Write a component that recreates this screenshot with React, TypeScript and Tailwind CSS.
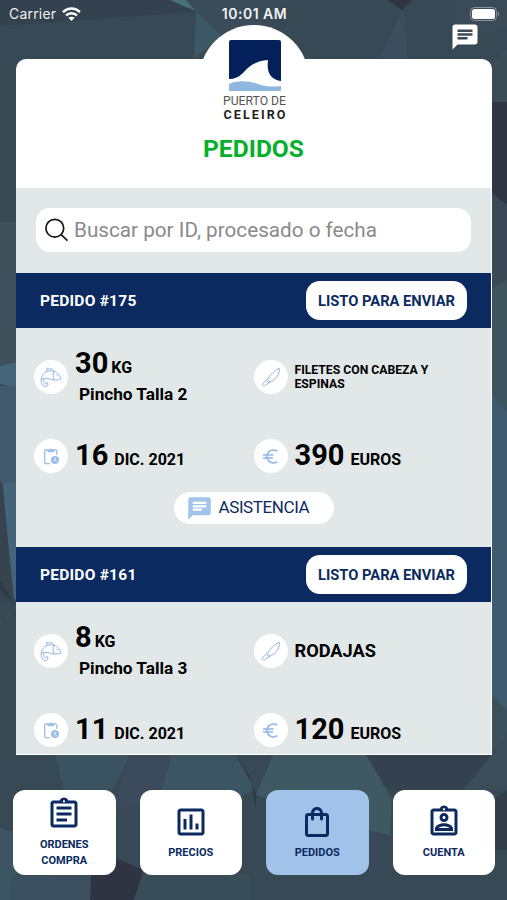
import {
  MdChat,
  MdOutlineAssignment,
  MdOutlineAssignmentInd,
  MdOutlinePoll,
  MdOutlineShoppingBag,
} from "react-icons/md";

type Order = {
  id: number;
  status: string;
  kg: number;
  product: string;
  cut: string;
  longCut?: boolean;
  day: number;
  month: string;
  price: number;
  support?: boolean;
};

const ORDERS: Order[] = [
  {
    id: 175,
    status: "LISTO PARA ENVIAR",
    kg: 30,
    product: "Pincho Talla 2",
    cut: "FILETES CON CABEZA Y ESPINAS",
    longCut: true,
    day: 16,
    month: "DIC. 2021",
    price: 390,
    support: true,
  },
  {
    id: 161,
    status: "LISTO PARA ENVIAR",
    kg: 8,
    product: "Pincho Talla 3",
    cut: "RODAJAS",
    day: 11,
    month: "DIC. 2021",
    price: 120,
  },
];

const TABS = [
  { icon: <MdOutlineAssignment size={36} />, label: "ORDENES COMPRA" },
  { icon: <MdOutlinePoll size={36} />, label: "PRECIOS" },
  { icon: <MdOutlineShoppingBag size={36} />, label: "PEDIDOS", active: true },
  { icon: <MdOutlineAssignmentInd size={36} />, label: "CUENTA" },
];

function Backdrop() {
  return (
    <svg
      className="absolute inset-0 h-full w-full"
      viewBox="0 0 507 900"
      preserveAspectRatio="none"
    >
      <rect width="507" height="900" fill="#384956" />
      <path d="M0 0H170L196 12L0 26Z" fill="#34414e" />
      <path d="M170 0H186L198 12Z" fill="#49707d" />
      <path d="M186 0H290L240 40L194 60L198 14Z" fill="#3a4c59" />
      <path d="M196 12L222 36L194 58Z" fill="#3d5865" />
      <path d="M388 0H412L402 10Z" fill="#2f3541" />
      <path d="M402 10L380 60H408L404 14Z" fill="#3c4e5d" />
      <path d="M456 0H507V28L456 40Z" fill="#3a4a57" />
      <path d="M507 50L490 64V102H507Z" fill="#3b4c56" />
      <path d="M490 102H507V205L490 192Z" fill="#2f3542" />
      <path d="M490 192L507 205V300H490Z" fill="#3b4957" />
      <path d="M490 290L507 280V412L490 392Z" fill="#3e545f" />
      <path d="M490 392L507 412V710L490 695Z" fill="#405b70" />
      <path d="M0 222H18V365H0Z" fill="#3d505c" />
      <path d="M0 366L18 362V388L0 384Z" fill="#43667a" />
      <path d="M0 386H18V484H0Z" fill="#415a6e" />
      <path d="M2 484L18 482V604L14 598Z" fill="#44647a" />
      <path d="M0 600L14 602L13 600L3 486L0 480Z" fill="#36444f" />
      <path d="M0 580L14 602L0 590Z" fill="#2f3a46" />
      <path d="M0 626L14 604L10 616L0 622Z" fill="#3c4f5a" />
      <path d="M55 755H130L112 790L70 810Z" fill="#3b5361" />
      <path d="M130 755H180L160 800L112 810Z" fill="#3b4b5b" />
      <path d="M172 755H236L256 790L230 800L160 795Z" fill="#3c5563" />
      <path d="M236 755L256 792V810L250 776Z" fill="#2e3b47" />
      <path d="M273 755H366L392 800L390 835L366 830L256 795Z" fill="#3f5963" />
      <path d="M366 755H507V740L462 790H388Z" fill="#33424e" />
      <path d="M507 735L464 790H507Z" fill="#3a4d58" />
      <path d="M490 694L507 710V735L490 755Z" fill="#3c515c" />
      <path d="M0 828L24 836L12 900H0Z" fill="#3c5563" />
      <path d="M12 876L90 874L92 900H10Z" fill="#3b4f5f" />
      <path d="M92 865L116 858L143 870L134 900H90Z" fill="#2e3442" />
      <path d="M143 875H250V900H134Z" fill="#394d59" />
      <path d="M366 830L392 836L376 876H366Z" fill="#384858" />
      <path d="M494 800L507 790V850H494Z" fill="#323d49" />
    </svg>
  );
}

function StatusBar() {
  return (
    <div className="grid h-7 grid-cols-3 items-center pl-[9px] pr-[7px] font-['Inter',sans-serif] text-[14px] leading-none text-white/95">
      <div className="flex items-center gap-1.5">
        <span className="tracking-[0.2px]">Carrier</span>
        <svg width="19" height="14" viewBox="0 0 19 14" fill="none" stroke="white" strokeWidth="2.5">
          <path d="M1 5.2C6 .4 13 .4 18 5.2" />
          <path d="M4 8.4C7.2 5.5 11.8 5.5 15 8.4" />
          <path d="M9.5 14L6.4 10.8C8 9.3 11 9.3 12.6 10.8Z" fill="white" stroke="none" />
        </svg>
      </div>
      <span className="text-center text-[14px] font-semibold tracking-[0.5px]">10:01 AM</span>
      <svg className="justify-self-end" width="30" height="14" viewBox="0 0 30 14">
        <rect x="0.5" y="0.5" width="26" height="13" rx="4" fill="none" stroke="#8a949c" />
        <rect x="2" y="2" width="23" height="10" rx="2.5" fill="white" />
        <path d="M28 5C29.7 5.5 29.7 8.5 28 9Z" fill="#8a949c" />
      </svg>
    </div>
  );
}

function Logo() {
  return (
    <svg width="52" height="51" viewBox="0 0 52 51">
      <path
        d="M2 0H50Q52 0 52 2V41C43 40 37 34 39 20C25 21 20 27 14 33Q8 39 0 39V2Q0 0 2 0Z"
        fill="#04205a"
      />
      <path d="M0 44C9 40 20 41 29 44C38 47 44 47 52 46V51H0Z" fill="#8fb7e0" />
    </svg>
  );
}

function FishIcon() {
  return (
    <svg width="22" height="21" viewBox="0 0 22 21" fill="none" stroke="#8fb6e8" strokeWidth="1" strokeLinejoin="round">
      <path d="M1.2 12.4C1.8 6.6 6 3.6 12 3.8C16.4 4.2 19.8 7.4 20.9 11.9C17.6 13.6 13.4 13.2 10.4 12.2C7 11.2 3.6 11 1.2 12.4Z" />
      <path d="M6.6 4.8L7 1L9.4 2.2L11.4 1.5L13.6 3.8" />
      <path d="M14 4.1C12.6 6.6 12.8 10 14.2 13" />
      <path d="M1.2 12.4C.8 15.6 2.2 18.4 5.2 19.8L8.2 17.8L7.4 15.6L5.4 16.8C4 15.8 3.4 14 3.8 11.6" />
      <circle cx="17.2" cy="8.8" r="0.3" />
    </svg>
  );
}

function KnifeIcon() {
  return (
    <svg width="20" height="20" viewBox="0 0 20 20" fill="none" stroke="#8fb6e8" strokeWidth="1" strokeLinejoin="round">
      <path d="M18.3 1.2C13.2 3.6 9.2 7.8 6.4 12.2L9.2 15C14.6 12.6 18.9 8 18.3 1.2Z" />
      <path d="M6.4 12.2L1.8 16.4C.3 18 2.2 19.8 3.8 18.5L9.2 15M5.4 13.2L8 15.8" />
    </svg>
  );
}

function DateIcon() {
  return (
    <svg width="17" height="18" viewBox="0 0 17 18" fill="none" stroke="#9cbfe9" strokeWidth="1.3">
      <path d="M7 16.6H3Q1.7 16.6 1.7 15.3V4.3Q1.7 3 3 3H12.6Q13.9 3 13.9 4.3V8" />
      <path d="M4.6 2.6H6.2A1.7 1.7 0 0 1 9.4 2.6H11V5.2H4.6Z" fill="#9cbfe9" stroke="none" />
      <circle cx="12" cy="13" r="4" fill="#9cbfe9" stroke="none" />
      <path d="M12 10.8V13.2L13.5 14.6" stroke="white" strokeWidth="0.9" />
    </svg>
  );
}

function EuroIcon() {
  return (
    <svg width="17" height="17" viewBox="0 0 17 17" fill="none" stroke="#8fb6e8" strokeWidth="1.5">
      <path d="M15.3 3.3A6.5 6.5 0 1 0 15.3 13.7" />
      <path d="M1 7H11.5M1 10H11" strokeWidth="1.3" />
    </svg>
  );
}

function RoundIcon({ children }: { children: React.ReactNode }) {
  return (
    <div className="flex h-[34px] w-[34px] shrink-0 items-center justify-center rounded-full bg-white">
      {children}
    </div>
  );
}

function OrderCard({ order }: { order: Order }) {
  return (
    <section>
      {/* Header */}
      <div className="flex h-[55px] items-center justify-between bg-[#0b2a60] pl-[24px] pr-6">
        <h2 className="pt-[3px] text-[15.5px] font-bold tracking-[0.25px] text-white">
          PEDIDO #{order.id}
        </h2>
        <button className="h-[39px] w-[161px] rounded-[14px] bg-white pt-px text-[14.7px] font-bold text-[#0b2a60]">
          {order.status}
        </button>
      </div>

      {/* Details */}
      <div className="flex h-[219px] flex-col px-[18px] pt-[17px]">
        <div className="grid grid-cols-2">
          <div className="flex h-16 items-center gap-[7px]">
            <RoundIcon>
              <FishIcon />
            </RoundIcon>
            <div className="flex flex-col pb-[3px]">
              <p className="text-[17px] font-bold leading-[33px]">
                <span className="text-[29px]">{order.kg}</span>
                <span className="ml-[3px] text-[16px]">KG</span>
              </p>
              <p className="ml-[4px] text-[17.2px] font-bold leading-5">{order.product}</p>
            </div>
          </div>
          <div className="flex h-16 items-center gap-[7px]">
            <RoundIcon>
              <KnifeIcon />
            </RoundIcon>
            <p
              className={
                order.longCut
                  ? "w-[145px] text-[12.2px] font-bold leading-[14.5px]"
                  : "text-[18.2px] font-bold"
              }
            >
              {order.cut}
            </p>
          </div>
        </div>

        <div className="mt-[30px] grid grid-cols-2">
          <div className="flex h-[34px] items-center gap-[7px]">
            <RoundIcon>
              <DateIcon />
            </RoundIcon>
            <p className="font-bold">
              <span className="text-[29px]">{order.day}</span>
              <span className="ml-[6px] text-[16px]">{order.month}</span>
            </p>
          </div>
          <div className="flex h-[34px] items-center gap-[7px]">
            <RoundIcon>
              <EuroIcon />
            </RoundIcon>
            <p className="font-bold">
              <span className="text-[29px]">{order.price}</span>
              <span className="ml-[6px] text-[16px]">EUROS</span>
            </p>
          </div>
        </div>

        {order.support && (
          <button className="mt-[19px] flex h-8 w-40 items-center gap-[6px] self-center rounded-full bg-white pl-3 text-[17px] tracking-[-0.4px] text-[#0b2a60]">
            <MdChat size={27} className="text-[#a3c4ea]" />
            ASISTENCIA
          </button>
        )}
      </div>
    </section>
  );
}

export default function App() {
  return (
    <div className="relative h-[900px] w-[507px] overflow-hidden bg-[#384956] font-['Roboto',sans-serif] text-black">
      <Backdrop />

      <div className="relative flex h-full flex-col">
        <StatusBar />
        <div className="flex h-[31px] justify-end pr-[27px]">
          <MdChat size={30} className="-mt-[6px] text-white" />
        </div>

        <main className="mx-4 flex h-[696px] w-[476px] flex-col rounded-t-[10px] bg-white pb-px pr-px">
          <header className="flex h-[129px] shrink-0 flex-col items-center">
            <div className="-mt-[34px] flex h-[110px] w-[110px] shrink-0 flex-col items-center rounded-full bg-white pt-[15px]">
              <div className="ml-[3px]">
                <Logo />
              </div>
              <span className="ml-[2px] mt-[4px] text-[12.2px] leading-[13px] text-[#555]">
                PUERTO DE
              </span>
              <span className="ml-[4px] text-[12.5px] font-bold leading-[13px] tracking-[2.1px] text-[#222]">
                CELEIRO
              </span>
            </div>
            <h1 className="text-[24.6px] font-bold leading-7 text-[#06b02b]">PEDIDOS</h1>
          </header>

          <div className="min-h-0 flex-1 overflow-hidden bg-[#e2e7e7]">
            <div className="flex h-[85px] items-start px-5 pt-5">
              <label className="flex h-11 w-full items-center gap-[5px] rounded-[14px] bg-white pl-[9px]">
                <svg
                  className="shrink-0"
                  width="24"
                  height="24"
                  viewBox="0 0 24 24"
                  fill="none"
                  stroke="#151515"
                  strokeWidth="1.7"
                >
                  <circle cx="9.8" cy="10.2" r="8.9" />
                  <path d="M16.2 16.6L22.4 22.6" />
                </svg>
                <input
                  className="w-full bg-transparent pt-0.5 text-[20.7px] outline-none placeholder:text-[#8a8a8a]"
                  placeholder="Buscar por ID, procesado o fecha"
                />
              </label>
            </div>

            {ORDERS.map((order) => (
              <OrderCard key={order.id} order={order} />
            ))}
          </div>
        </main>

        {/* Bottom tabs */}
        <nav className="mt-[35px] flex gap-6 pl-[13px] pr-3">
          {TABS.map((tab) => (
            <button
              key={tab.label}
              className={`flex h-[85px] flex-1 flex-col items-center justify-center rounded-xl text-[#0b2a60] ${
                tab.active ? "bg-[#a1c3e9]" : "bg-white"
              }`}
            >
              {tab.icon}
              <span className="mt-[5px] w-16 text-[11px] font-bold leading-4">{tab.label}</span>
            </button>
          ))}
        </nav>
      </div>
    </div>
  );
}
